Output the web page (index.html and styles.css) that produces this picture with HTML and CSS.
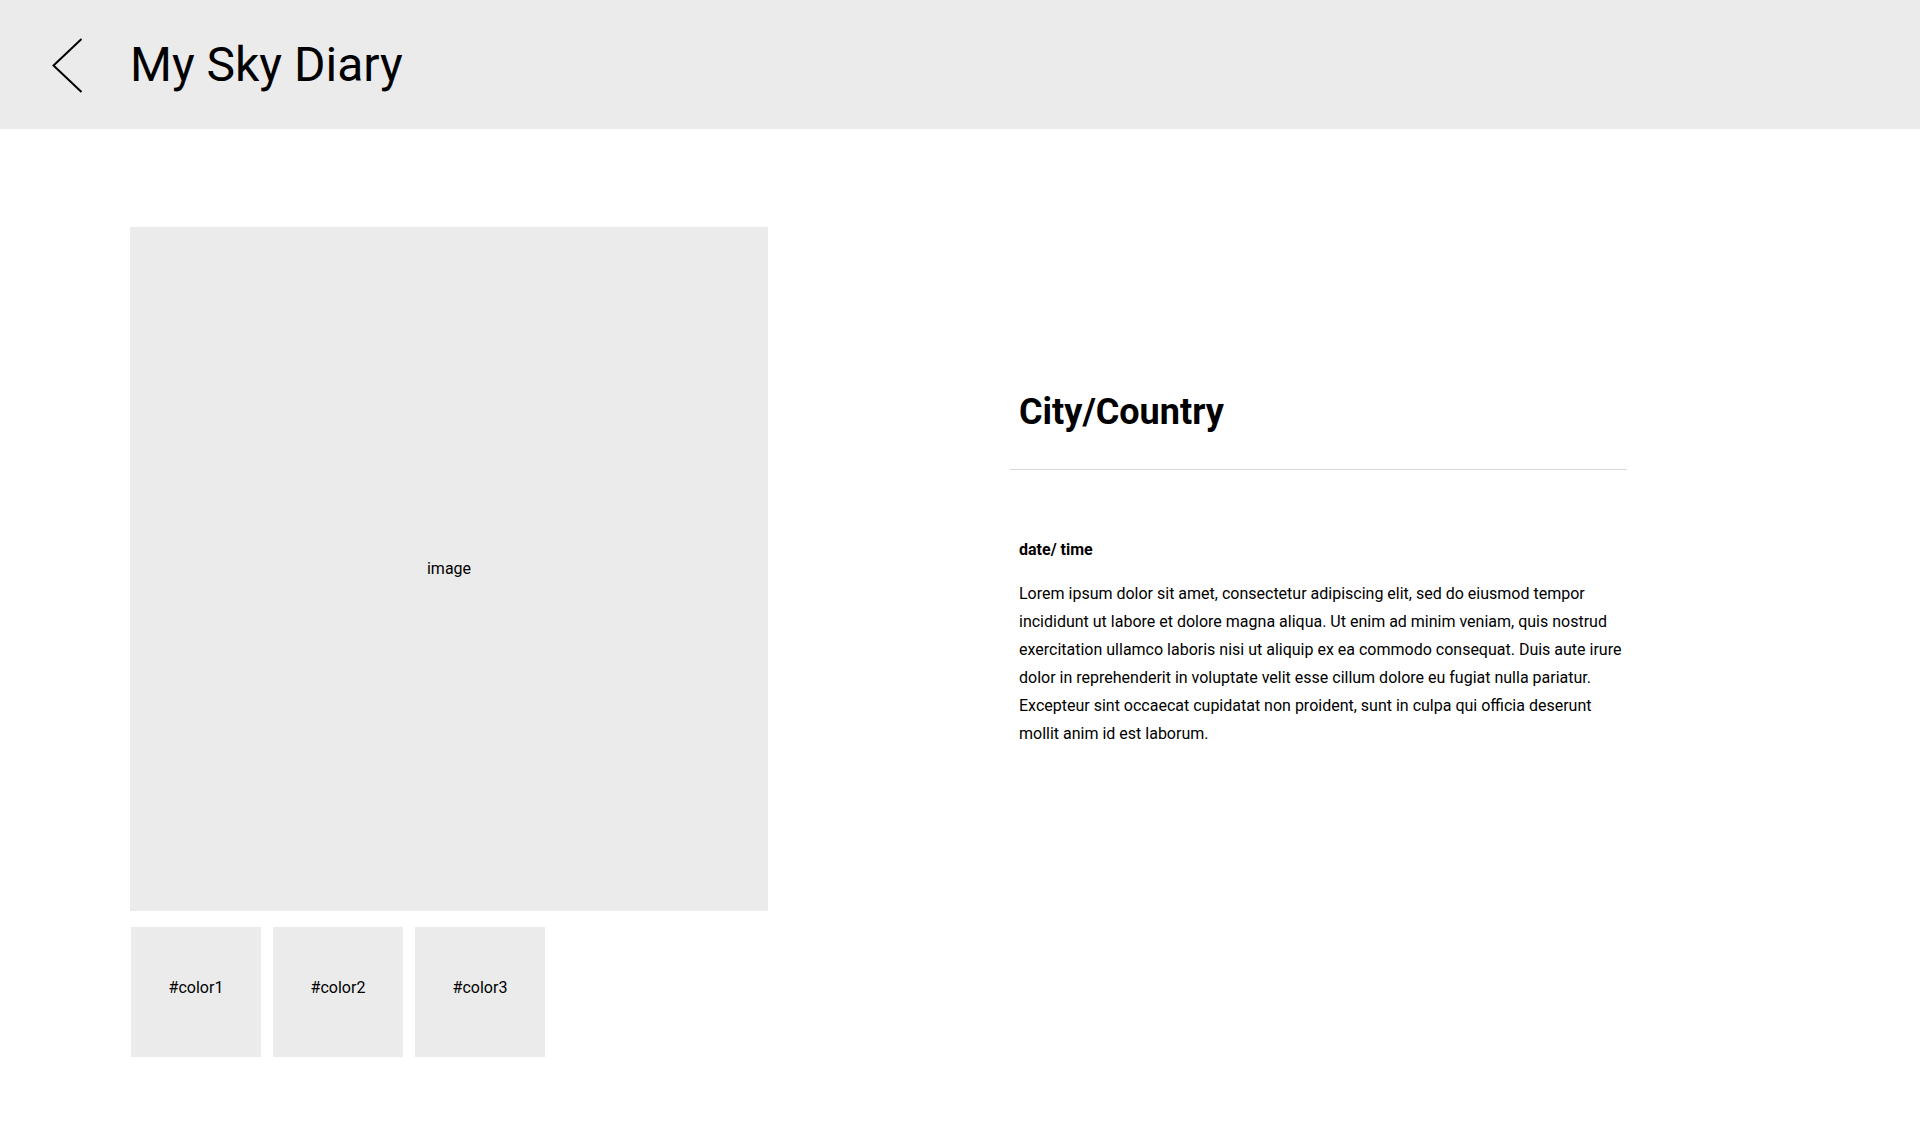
FILE: index.html
```html
<!DOCTYPE html>
<html lang="en">
<head>
<meta charset="utf-8">
<title>My Sky Diary</title>
<link rel="stylesheet" href="styles.css">
</head>
<body>
<header class="topbar">
  <a class="back" href="#" aria-label="Back">
    <svg width="31" height="55" viewBox="0 0 31 55" fill="none" stroke="#000" stroke-width="2">
      <path d="M29.5 1 L1.5 27.5 L29.5 54"/>
    </svg>
  </a>
  <h1 class="title">My Sky Diary</h1>
</header>
<main class="entry">
  <div class="photo">image</div>
  <section class="info">
    <h2 class="place">City/Country</h2>
    <hr class="divider">
    <div class="date">date/ time</div>
    <p class="body">Lorem ipsum dolor sit amet, consectetur adipiscing elit, sed do eiusmod tempor incididunt ut labore et dolore magna aliqua. Ut enim ad minim veniam, quis nostrud exercitation ullamco laboris nisi ut aliquip ex ea commodo consequat. Duis aute irure dolor in reprehenderit in voluptate velit esse cillum dolore eu fugiat nulla pariatur. Excepteur sint occaecat cupidatat non proident, sunt in culpa qui officia deserunt mollit anim id est laborum.</p>
  </section>
  <div class="swatches">
    <div class="swatch">#color1</div>
    <div class="swatch">#color2</div>
    <div class="swatch">#color3</div>
  </div>
</main>
</body>
</html>
```
FILE: styles.css
```css
* { box-sizing: border-box; }
html, body {
  margin: 0;
  padding: 0;
  background: #fff;
  color: #000;
  font-family: Roboto, "Liberation Sans", sans-serif;
}
.topbar {
  height: 129px;
  background: #ebebeb;
  display: flex;
  align-items: center;
  padding-left: 52px;
}
.back {
  display: flex;
  width: 31px;
  height: 55px;
  margin-right: 47px;
  margin-top: 1px;
}
.title {
  margin: 0;
  font-size: 48px;
  font-weight: 400;
  line-height: 56px;
}
.entry {
  display: grid;
  grid-template-columns: 638px 617px;
  column-gap: 242px;
  row-gap: 16px;
  align-items: center;
  padding: 98px 0 0 130px;
}
.photo {
  height: 684px;
  background: #ebebeb;
  display: flex;
  align-items: center;
  justify-content: center;
  padding-bottom: 2px;
  font-size: 16px;
}
.info {
  display: flex;
  flex-direction: column;
}
.place {
  margin: 0 0 36px;
  padding-left: 9px;
  font-size: 36px;
  font-weight: 700;
  line-height: 42px;
}
.divider {
  margin: 0;
  border: 0;
  height: 1px;
  background: #d9d9d9;
}
.date {
  margin-top: 70px;
  padding-left: 9px;
  font-size: 16px;
  font-weight: 700;
  line-height: 20px;
}
.body {
  margin: 20px 0 0;
  padding-left: 9px;
  font-size: 16px;
  line-height: 28px;
}
.swatches {
  display: flex;
  gap: 12px;
  padding-left: 1px;
  align-self: start;
}
.swatch {
  width: 130px;
  height: 130px;
  background: #ebebeb;
  display: flex;
  align-items: center;
  justify-content: center;
  padding-bottom: 10px;
  font-size: 16px;
}
```
